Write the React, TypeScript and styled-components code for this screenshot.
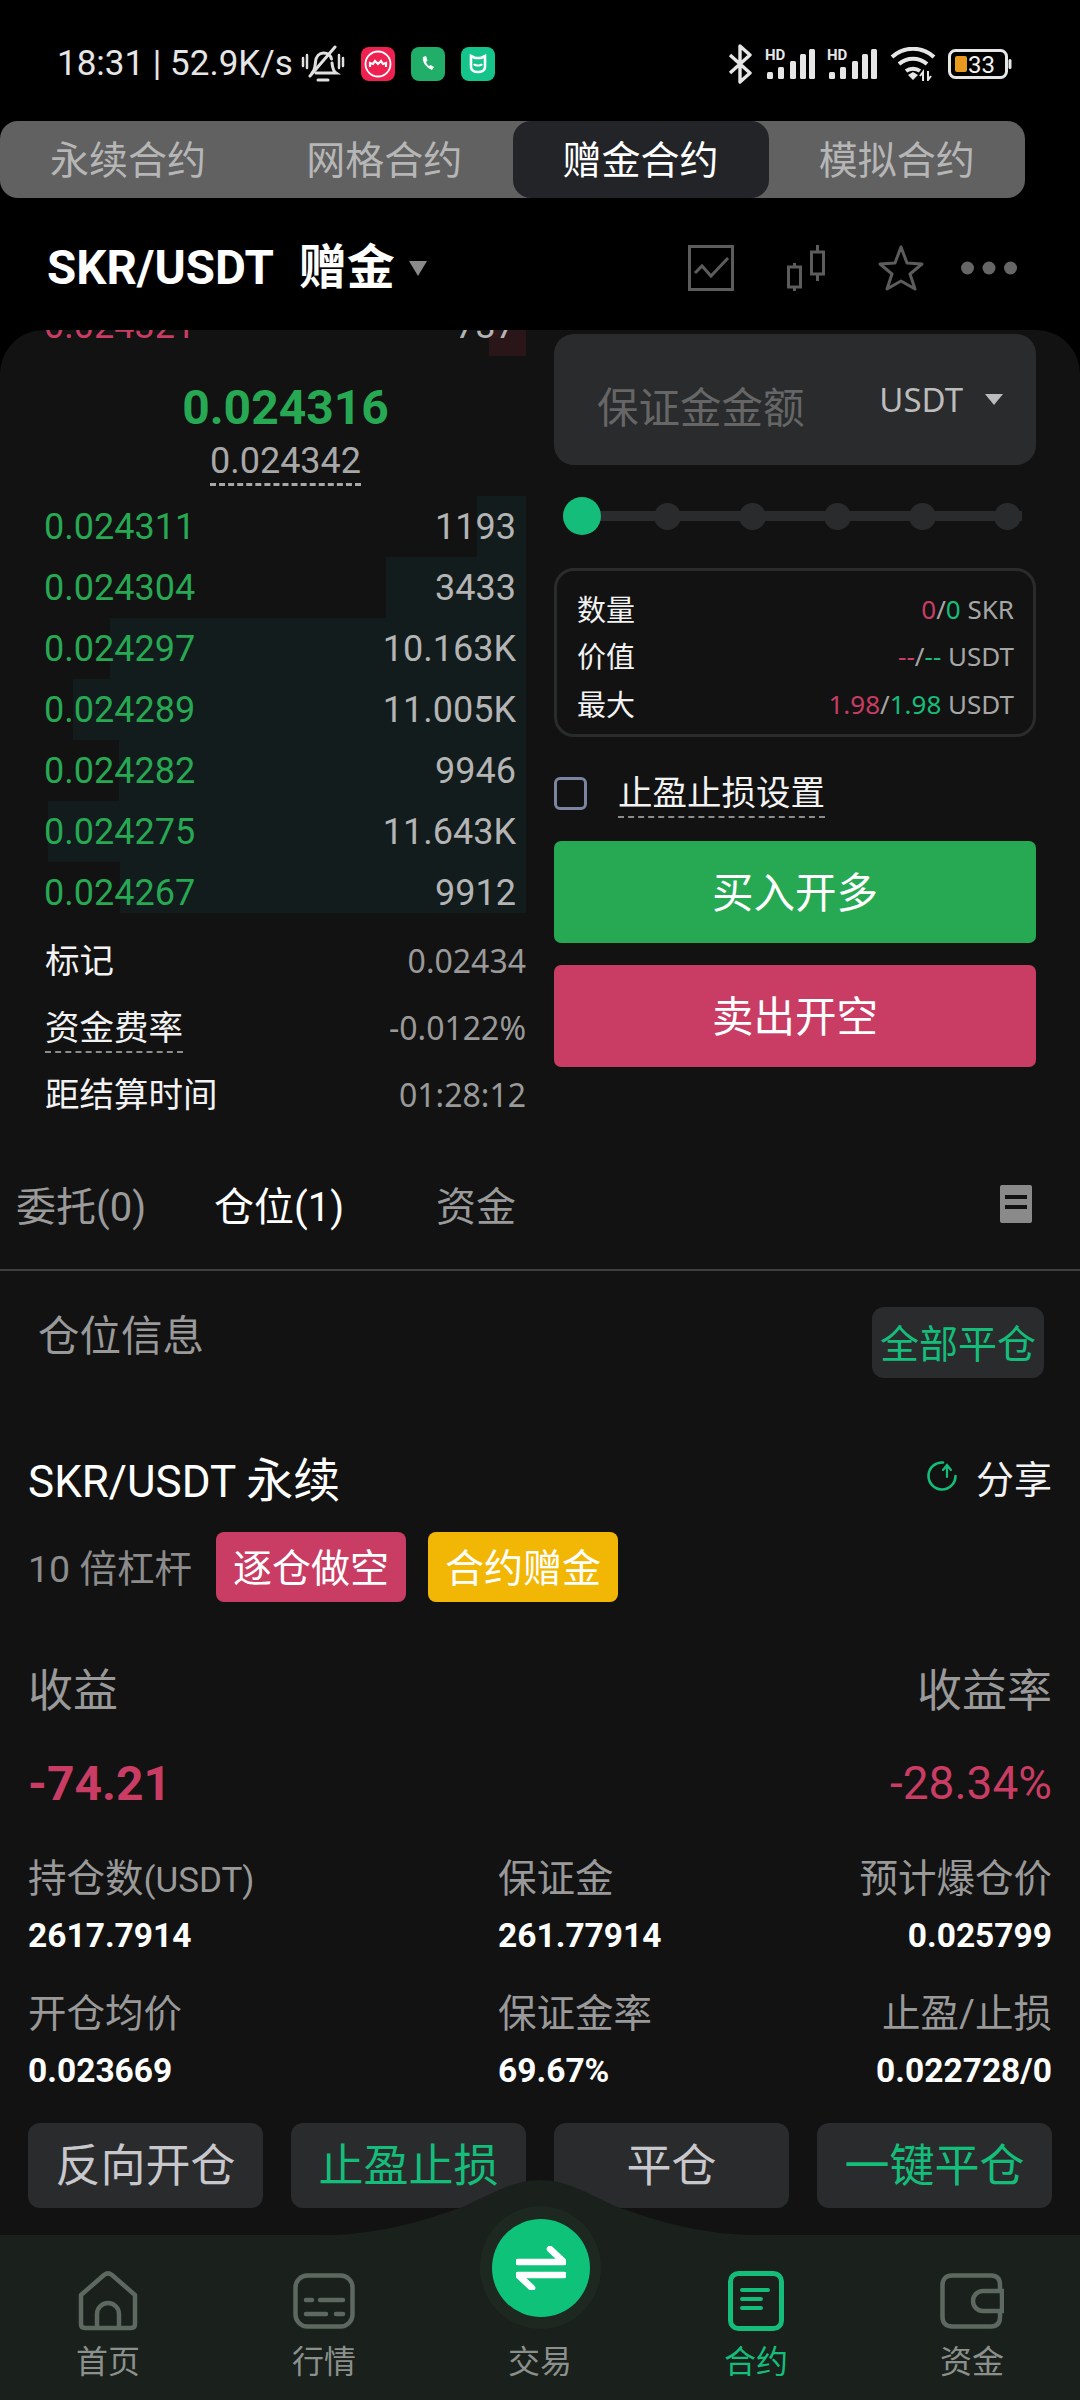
import React from "react";
import styled, { createGlobalStyle } from "styled-components";

const GREEN = "#27a853";
const MINT = "#15bd7b";
const RED = "#c93c63";
const PANEL = "#121212";
const CHIP = "#2a2b2d";
const SANS = `Roboto, "Noto Sans CJK SC", sans-serif`;
const NOTO = `"Noto Sans", "Noto Sans CJK SC", sans-serif`;

const Global = createGlobalStyle`
  html, body { margin: 0; padding: 0; background: #000; }
  body { font-family: ${SANS}; color: #fff; }
  * { box-sizing: border-box; }
`;

const Page = styled.div`
  width: 1080px;
  height: 2400px;
  overflow: hidden;
  display: flex;
  flex-direction: column;
  background: #000;
`;

/* status bar */
const StatusBar = styled.div`
  height: 121px;
  flex-shrink: 0;
  padding: 6px 68px 0 57px;
  display: flex;
  align-items: center;
  justify-content: space-between;
`;
const StatusLeft = styled.div`
  display: flex;
  align-items: center;
  gap: 16px;
`;
const StatusRight = styled.div`
  display: flex;
  align-items: center;
  gap: 12.5px;
`;
const Clock = styled.span`
  font-size: 35px;
  line-height: 42px;
  color: #e6e6e6;
  margin-right: -8px;
  white-space: pre;
`;

/* market tabs */
const MarketTabs = styled.div`
  width: 1025px;
  height: 77px;
  flex-shrink: 0;
  display: grid;
  grid-template-columns: repeat(4, 1fr);
  background: #616161;
  border-radius: 18px;
`;
const MarketTab = styled.div<{ $active?: boolean }>`
  padding-bottom: 5px;
  display: flex;
  align-items: center;
  justify-content: center;
  font-size: 39px;
  border-radius: 18px;
  color: ${(p) => (p.$active ? "#fff" : "#b6b6b6")};
  background: ${(p) => (p.$active ? "#232428" : "transparent")};
`;

/* pair header */
const PairHeader = styled.div`
  height: 132px;
  flex-shrink: 0;
  padding: 8px 0 0 47px;
  display: flex;
  align-items: center;
  justify-content: space-between;
`;
const PairName = styled.div`
  display: flex;
  align-items: center;
  font-size: 47.5px;
  font-weight: 700;
  line-height: 60px;
`;
const PairBadge = styled.span`
  margin-left: 25px;
  font-size: 48px;
`;
const PairCaret = styled.span`
  margin-left: 14px;
  width: 0;
  height: 0;
  border-left: 9px solid transparent;
  border-right: 9px solid transparent;
  border-top: 15px solid #8a8a8a;
`;
const PairTools = styled.div`
  width: 390px;
  margin-right: 2px;
  display: grid;
  grid-template-columns: 99px 91px 83px 56px;
  align-items: center;
  svg { display: block; }
`;

/* main panel */
const Panel = styled.div`
  flex: 1;
  min-height: 0;
  background: ${PANEL};
  border-radius: 44px 44px 0 0;
  overflow: hidden;
  display: flex;
  flex-direction: column;
`;
const TradeArea = styled.div`
  height: 798px;
  flex-shrink: 0;
  display: grid;
  grid-template-columns: 526px 482px;
  column-gap: 28px;
`;

/* order book */
const BookColumn = styled.div`
  display: flex;
  flex-direction: column;
`;
const AskClip = styled.div`
  height: 26px;
  flex-shrink: 0;
  overflow: hidden;
  display: flex;
  flex-direction: column;
  justify-content: flex-end;
`;
const PriceBlock = styled.div`
  height: 140px;
  flex-shrink: 0;
  padding: 22px 0 0 45px;
  display: flex;
  flex-direction: column;
  align-items: center;
`;
const LastPrice = styled.div`
  font-size: 48px;
  font-weight: 700;
  line-height: 60px;
  color: ${GREEN};
`;
const MarkPrice = styled.div`
  margin-top: 2px;
  font-size: 36px;
  line-height: 42px;
  height: 46px;
  color: #a8a8a8;
  border-bottom: 3px dashed #a8a8a8;
`;
const BidList = styled.div`
  height: 417px;
  flex-shrink: 0;
  overflow: hidden;
`;
const BookRow = styled.div<{ $depth: number; $tint: string }>`
  height: 61px;
  flex-shrink: 0;
  padding: 0 10px 0 44px;
  display: flex;
  align-items: center;
  justify-content: space-between;
  font-size: 36px;
  background: linear-gradient(
    to left,
    ${(p) => p.$tint} ${(p) => p.$depth}px,
    transparent ${(p) => p.$depth}px
  );
`;
const BookPrice = styled.span<{ $color: string }>`
  color: ${(p) => p.$color};
`;
const BookSize = styled.span`
  color: #b4b4b4;
`;
const FundingList = styled.div`
  margin-top: 14px;
  padding-left: 45px;
`;
const FundingRow = styled.div`
  height: 67px;
  display: flex;
  align-items: center;
  justify-content: space-between;
`;
const FundingLabel = styled.span<{ $dashed?: boolean }>`
  font-size: 34.5px;
  line-height: 46px;
  color: #f2f2f2;
  ${(p) => p.$dashed && "border-bottom: 2px dashed #8c8c8c; margin-top: 2px;"}
`;
const FundingValue = styled.span`
  font-family: ${NOTO};
  font-size: 32px;
  color: #999;
`;

/* order form */
const FormColumn = styled.div`
  padding-top: 4px;
`;
const AmountField = styled.div`
  height: 131px;
  padding: 0 33px 0 43px;
  background: ${CHIP};
  border-radius: 20px;
  display: flex;
  align-items: center;
  justify-content: space-between;
`;
const Placeholder = styled.span`
  padding-top: 11px;
  font-size: 41.5px;
  color: #666;
`;
const UnitPicker = styled.span`
  display: flex;
  align-items: center;
  gap: 22px;
  font-family: ${NOTO};
  font-size: 33px;
  color: #bcbcbc;
`;
const UnitCaret = styled.span`
  width: 0;
  height: 0;
  border-left: 9px solid transparent;
  border-right: 9px solid transparent;
  border-top: 11px solid #bcbcbc;
`;
const Slider = styled.div`
  width: 459px;
  height: 38px;
  margin: 32px 0 0 9px;
  display: flex;
  align-items: center;
  gap: 58px;
  background: linear-gradient(${CHIP}, ${CHIP}) center / 100% 10px no-repeat;
`;
const SliderThumb = styled.span`
  width: 38px;
  height: 38px;
  margin-right: -5px;
  border-radius: 50%;
  background: ${MINT};
`;
const SliderDot = styled.span`
  width: 27px;
  height: 27px;
  border-radius: 50%;
  background: ${CHIP};
`;
const QuoteBox = styled.div`
  height: 169px;
  margin-top: 33px;
  padding: 14px 19px 0 20px;
  border: 3px solid ${CHIP};
  border-radius: 20px;
`;
const QuoteRow = styled.div`
  height: 47.5px;
  display: flex;
  align-items: center;
  justify-content: space-between;
`;
const QuoteLabel = styled.span`
  margin-top: -2px;
  font-size: 29px;
  color: #f2f2f2;
`;
const QuoteValue = styled.span`
  font-family: ${NOTO};
  font-size: 26px;
  color: #a6a6a6;
  white-space: pre;
`;
const Tone = styled.span<{ $color: string }>`
  color: ${(p) => p.$color};
`;
const StopRow = styled.div`
  margin-top: 33px;
  display: flex;
  align-items: flex-start;
  gap: 31px;
`;
const CheckBox = styled.span`
  width: 33px;
  height: 33px;
  margin-top: 7px;
  border: 3px solid #7b84a0;
  border-radius: 6px;
`;
const StopLabel = styled.span`
  font-size: 34.5px;
  line-height: 46px;
  color: #f2f2f2;
  border-bottom: 2px dashed #8c8c8c;
`;
const SideButton = styled.div<{ $color: string; $gap: number }>`
  height: 102px;
  margin-top: ${(p) => p.$gap}px;
  padding-bottom: 4px;
  display: flex;
  align-items: center;
  justify-content: center;
  font-size: 41.5px;
  border-radius: 7px;
  background: ${(p) => p.$color};
`;

/* tabs below the form */
const RecordTabs = styled.div`
  height: 143px;
  flex-shrink: 0;
  padding: 11px 48px 0 16px;
  display: grid;
  grid-template-columns: 198px 222px 1fr auto;
  align-items: center;
  border-bottom: 2px solid #3f3f3f;
`;
const RecordTab = styled.span<{ $active?: boolean }>`
  font-size: 40px;
  color: ${(p) => (p.$active ? "#fff" : "#9a9a9a")};
`;

/* position */
const SectionHead = styled.div`
  padding: 36px 36px 0 38px;
  flex-shrink: 0;
  display: flex;
  align-items: flex-start;
  justify-content: space-between;
`;
const SectionTitle = styled.span`
  font-size: 41.5px;
  line-height: 60px;
  color: #999;
`;
const CloseAll = styled.span`
  width: 172px;
  height: 71px;
  padding-bottom: 4px;
  display: flex;
  align-items: center;
  justify-content: center;
  font-size: 39px;
  color: ${MINT};
  background: ${CHIP};
  border-radius: 12px;
`;
const Position = styled.div`
  padding: 0 28px;
  flex-shrink: 0;
`;
const SymbolRow = styled.div`
  height: 64px;
  margin-top: 66px;
  display: flex;
  align-items: center;
  justify-content: space-between;
`;
const SymbolName = styled.span`
  font-size: 44px;
`;
const SymbolKind = styled.span`
  font-size: 47px;
`;
const ShareLink = styled.span`
  display: flex;
  align-items: center;
  gap: 18px;
  font-size: 38px;
  color: #f2f2f2;
`;
const TagRow = styled.div`
  height: 70px;
  margin-top: 24px;
  display: flex;
  align-items: center;
`;
const Leverage = styled.span`
  width: 188px;
  padding-bottom: 3px;
  font-size: 37.5px;
  color: #8c8c8c;
`;
const Tag = styled.span<{ $color: string }>`
  width: 190px;
  height: 70px;
  margin-right: 22px;
  padding-bottom: 4px;
  display: flex;
  align-items: center;
  justify-content: center;
  font-size: 39px;
  border-radius: 8px;
  background: ${(p) => p.$color};
`;
const PnlLabels = styled.div`
  height: 60px;
  margin-top: 55px;
  display: flex;
  align-items: center;
  justify-content: space-between;
  font-size: 45px;
  color: #999;
`;
const PnlValues = styled.div`
  height: 60px;
  margin-top: 36px;
  display: flex;
  align-items: center;
  justify-content: space-between;
  color: ${RED};
`;
const PnlAmount = styled.span`
  font-size: 48px;
  font-weight: 700;
`;
const PnlRate = styled.span`
  font-size: 46px;
`;
const StatGrid = styled.div`
  margin-top: 41px;
  display: grid;
  grid-template-columns: 470px 1fr 1fr;
  row-gap: 31px;
`;
const StatCell = styled.div<{ $end?: boolean }>`
  text-align: ${(p) => (p.$end ? "right" : "left")};
`;
const StatLabel = styled.div`
  height: 50px;
  font-size: 38.5px;
  line-height: 50px;
  color: #999;
  white-space: nowrap;
`;
const StatUnit = styled.span`
  font-size: 35px;
`;
const StatValue = styled.div`
  height: 44px;
  margin-top: 10px;
  font-size: 33.5px;
  font-weight: 700;
  line-height: 44px;
`;
const ActionRow = styled.div`
  margin-top: 30px;
  display: grid;
  grid-template-columns: repeat(4, 235px);
  column-gap: 28px;
`;
const ActionButton = styled.div<{ $accent?: boolean }>`
  height: 85px;
  padding-bottom: 7px;
  display: flex;
  align-items: center;
  justify-content: center;
  font-size: 45px;
  color: ${(p) => (p.$accent ? MINT : "#c8c8cc")};
  background: ${CHIP};
  border-radius: 12px;
`;

/* bottom navigation */
const BottomNav = styled.nav`
  position: relative;
  height: 165px;
  flex-shrink: 0;
  margin-top: auto;
  padding-top: 36px;
  display: grid;
  grid-template-columns: repeat(5, 216px);
  background: #1a201b;
`;
const NavHump = styled.svg`
  position: absolute;
  left: 300px;
  top: -55px;
  display: block;
`;
const NavItem = styled.div<{ $active?: boolean }>`
  display: flex;
  flex-direction: column;
  align-items: center;
  font-size: 32px;
  color: ${(p) => (p.$active ? MINT : "#8b908c")};
`;
const NavIcon = styled.div`
  position: relative;
  height: 60px;
  display: flex;
  align-items: center;
  justify-content: center;
  svg { display: block; }
`;
const NavLabel = styled.span`
  margin-top: 11px;
  line-height: 40px;
`;
const SwapRing = styled.div`
  position: absolute;
  left: 50%;
  top: -65px;
  width: 121px;
  height: 123px;
  margin-left: -60px;
  display: flex;
  align-items: center;
  justify-content: center;
  border-radius: 50%;
  background: #1d2820;
`;
const SwapButton = styled.div`
  width: 98px;
  height: 98px;
  display: flex;
  align-items: center;
  justify-content: center;
  border-radius: 50%;
  background: #0ec27a;
`;

const BellMute = () => (
  <svg width="44" height="38" viewBox="0 0 44 38" fill="none" stroke="#e0e0e0" strokeWidth="3" strokeLinecap="round">
    <path d="M11 28c3-3 3-6 3.500-11 .5-6 4-9 8-9s7 2 8 6" />
    <path d="M31 18c.5 5 1 8 4 10H15" />
    <path d="M34 2 9 31" />
    <path d="M17 35h10" />
    <path d="M2 13v8M6 10v13M38 10v13M42 13v8" strokeWidth="2.500" />
  </svg>
);

const MeituIcon = () => (
  <svg width="34" height="34" viewBox="0 0 34 34">
    <rect width="34" height="34" rx="8" fill="#ee2150" />
    <circle cx="17" cy="17" r="12.500" fill="none" stroke="#fff" strokeWidth="1.800" />
    <path d="M9 20v-4l3 1 2-3 3 3 3-3 2 3 3-1v4" fill="none" stroke="#fff" strokeWidth="2.200" />
  </svg>
);

const PhoneApp = () => (
  <svg width="34" height="34" viewBox="0 0 34 34">
    <rect width="34" height="34" rx="8" fill="#20ae68" />
    <path d="M12 10c-1 4 2 10 9 13l2-3-3.500-2-1.500 1c-1.500-1-2.500-2.500-3-4l1.500-1.500L15 9z" fill="#fff" />
  </svg>
);

const MiHomeApp = () => (
  <svg width="34" height="34" viewBox="0 0 34 34">
    <rect width="34" height="34" rx="8" fill="#14c48a" />
    <path d="M10 9l4 2h6l4-2v11c0 3-3 5-7 5s-7-2-7-5z" fill="none" stroke="#fff" strokeWidth="2.600" />
    <path d="M13 17c1 2 7 2 8 0" fill="none" stroke="#fff" strokeWidth="2" />
  </svg>
);

const Bluetooth = () => (
  <svg width="24" height="40" viewBox="0 0 24 40" fill="none" stroke="#e6e6e6" strokeWidth="3.400" strokeLinejoin="round">
    <path d="M2 11l20 18-10 9V2l10 9L2 29" />
  </svg>
);

const SIGNAL_BARS: [number, number][] = [
  [2, 7],
  [13, 12],
  [25, 18],
  [35, 25],
  [44, 30],
];

const Signal = () => (
  <svg width="50" height="38" viewBox="0 -4 50 38" fill="#e6e6e6">
    <text x="0" y="11" fontFamily="Roboto" fontWeight="700" fontSize="15">
      HD
    </text>
    {SIGNAL_BARS.map(([x, h]) => (
      <rect key={x} x={x} y={30 - h} width="6" height={h} rx="1.500" />
    ))}
  </svg>
);

const Wifi = () => (
  <svg width="46" height="34" viewBox="0 0 46 34" fill="none" stroke="#e6e6e6" strokeWidth="4">
    <path d="M2 10c12-11 30-11 42 0" />
    <path d="M9 17c8-7 20-7 28 0" />
    <path d="M16 24c4-3 10-3 14 0" />
    <path d="M18 28l5 5 5-5-5-3z" fill="#e6e6e6" stroke="none" />
    <path d="M33 34v-9l-3 4M38 24v9l3-4" strokeWidth="2" />
  </svg>
);

const Battery = () => (
  <svg width="64" height="30" viewBox="0 0 64 30">
    <rect x="1.500" y="1.500" width="57" height="27" rx="6" fill="none" stroke="#e6e6e6" strokeWidth="3" />
    <rect x="7" y="7" width="12" height="16" rx="2" fill="#e79a1f" />
    <rect x="60.500" y="10" width="3" height="10" rx="1.500" fill="#e6e6e6" />
    <text x="20" y="24" fontFamily="Roboto" fontSize="24" fill="#f2f2f2">
      33
    </text>
  </svg>
);

const ChartTool = () => (
  <svg width="46" height="46" viewBox="0 0 46 46" fill="none" stroke="#5c5c5c" strokeWidth="3">
    <rect x="1.500" y="1.500" width="43" height="43" />
    <path d="M7 28l7-7 9 10 17-18" />
  </svg>
);

const CandleTool = () => (
  <svg width="38" height="46" viewBox="0 0 38 46" fill="none" stroke="#5c5c5c" strokeWidth="3">
    <rect x="1.500" y="22" width="12" height="20" />
    <path d="M7.500 18v4M7.500 42v4" />
    <rect x="24.500" y="7" width="12" height="22" />
    <path d="M30.500 0v7M30.500 29v7" />
  </svg>
);

const StarTool = () => (
  <svg width="46" height="46" viewBox="0 0 46 46" fill="none" stroke="#5c5c5c" strokeWidth="3" strokeLinejoin="round">
    <path d="M23 2l6 16 15 1-12 10 5 15-14-8-14 8 5-15L2 19l15-1z" />
  </svg>
);

const DotsTool = () => (
  <svg width="56" height="14" viewBox="0 0 56 14" fill="#666">
    <circle cx="6.500" cy="7" r="6.500" />
    <circle cx="28" cy="7" r="6.500" />
    <circle cx="49.500" cy="7" r="6.500" />
  </svg>
);

const ListIcon = () => (
  <svg width="32" height="38" viewBox="0 0 32 38">
    <rect width="32" height="38" rx="2" fill="#8a8a8a" />
    <rect x="5" y="10" width="22" height="4" fill={PANEL} />
    <rect x="5" y="20" width="22" height="4" fill={PANEL} />
  </svg>
);

const ShareIcon = () => (
  <svg width="32" height="32" viewBox="0 0 32 32" fill="none" stroke={MINT} strokeWidth="2.600" strokeLinecap="round">
    <path d="M17 2.500A13.500 13.500 0 1 0 29.500 16" />
    <path d="M21 17V6M17 10l4-5 4 5" strokeWidth="2.200" />
  </svg>
);

const HomeIcon = () => (
  <svg width="60" height="60" viewBox="0 0 60 60" fill="none" stroke="#5d6860" strokeWidth="4.500" strokeLinejoin="round">
    <path d="M3 24 26 4c2.500-2 5.500-2 8 0l23 20v29c0 2-1 4-4 4H7c-3 0-4-2-4-4z" />
    <path d="M19 57V43a11 11 0 0 1 22 0v14" />
  </svg>
);

const MarketIcon = () => (
  <svg width="62" height="56" viewBox="0 0 62 56" fill="none" stroke="#5d6860" strokeWidth="4.500" strokeLinecap="round">
    <rect x="2.500" y="2.500" width="57" height="51" rx="12" />
    <path d="M13 27h6M27 27h23M13 41h20M43 41h7" />
  </svg>
);

const ContractIcon = () => (
  <svg width="56" height="60" viewBox="0 0 56 60" fill="none" stroke={MINT} strokeLinecap="round">
    <rect x="2.500" y="2.500" width="51" height="55" rx="8" strokeWidth="5" />
    <path d="M14 19h26M14 28h19M14 37h19" strokeWidth="4" />
  </svg>
);

const WalletIcon = () => (
  <svg width="64" height="56" viewBox="0 0 64 56" fill="none" stroke="#5d6860" strokeWidth="4.500">
    <path d="M60 18v-6c0-6-3-9.500-9-9.500H12c-6 0-9.500 3.500-9.500 9.500v32c0 6 3.500 9.500 9.500 9.500h39c6 0 9-3.500 9-9.500v-6" />
    <path d="M62 18H43a10 10 0 0 0 0 20h19z" />
  </svg>
);

const SwapIcon = () => (
  <svg width="50" height="44" viewBox="0 0 50 44" fill="none" stroke="#fff" strokeWidth="6.500" strokeLinecap="round" strokeLinejoin="round">
    <path d="M2 16h46L34 3" />
    <path d="M48 29H2l14 13" />
  </svg>
);

const BIDS = [
  { price: "0.024311", size: "1193", depth: 49 },
  { price: "0.024304", size: "3433", depth: 140 },
  { price: "0.024297", size: "10.163K", depth: 416 },
  { price: "0.024289", size: "11.005K", depth: 453 },
  { price: "0.024282", size: "9946", depth: 407 },
  { price: "0.024275", size: "11.643K", depth: 478 },
  { price: "0.024267", size: "9912", depth: 406 },
];

const STATS = [
  { label: "持仓数", unit: "(USDT)", value: "2617.7914" },
  { label: "保证金", value: "261.77914" },
  { label: "预计爆仓价", value: "0.025799", end: true },
  { label: "开仓均价", value: "0.023669" },
  { label: "保证金率", value: "69.67%" },
  { label: "止盈/止损", value: "0.022728/0", end: true },
];

const App: React.FC = () => {
  return (
    <Page>
      <Global />
      <StatusBar>
        <StatusLeft>
          <Clock>18:31 | 52.9K/s</Clock>
          <BellMute />
          <MeituIcon />
          <PhoneApp />
          <MiHomeApp />
        </StatusLeft>
        <StatusRight>
          <Bluetooth />
          <Signal />
          <Signal />
          <Wifi />
          <Battery />
        </StatusRight>
      </StatusBar>

      <MarketTabs>
        <MarketTab>永续合约</MarketTab>
        <MarketTab>网格合约</MarketTab>
        <MarketTab $active>赠金合约</MarketTab>
        <MarketTab>模拟合约</MarketTab>
      </MarketTabs>

      <PairHeader>
        <PairName>
          SKR/USDT
          <PairBadge>赠金</PairBadge>
          <PairCaret />
        </PairName>
        <PairTools>
          <ChartTool />
          <CandleTool />
          <StarTool />
          <DotsTool />
        </PairTools>
      </PairHeader>

      <Panel>
        <TradeArea>
          <BookColumn>
            <AskClip>
              <BookRow $depth={37} $tint="#2a1519">
                <BookPrice $color={RED}>0.024321</BookPrice>
                <BookSize>737</BookSize>
              </BookRow>
            </AskClip>
            <PriceBlock>
              <LastPrice>0.024316</LastPrice>
              <MarkPrice>0.024342</MarkPrice>
            </PriceBlock>
            <BidList>
              {BIDS.map((bid) => (
                <BookRow key={bid.price} $depth={bid.depth} $tint="#121c1c">
                  <BookPrice $color={GREEN}>{bid.price}</BookPrice>
                  <BookSize>{bid.size}</BookSize>
                </BookRow>
              ))}
            </BidList>
            <FundingList>
              <FundingRow>
                <FundingLabel>标记</FundingLabel>
                <FundingValue>0.02434</FundingValue>
              </FundingRow>
              <FundingRow>
                <FundingLabel $dashed>资金费率</FundingLabel>
                <FundingValue>-0.0122%</FundingValue>
              </FundingRow>
              <FundingRow>
                <FundingLabel>距结算时间</FundingLabel>
                <FundingValue>01:28:12</FundingValue>
              </FundingRow>
            </FundingList>
          </BookColumn>

          <FormColumn>
            <AmountField>
              <Placeholder>保证金金额</Placeholder>
              <UnitPicker>
                USDT
                <UnitCaret />
              </UnitPicker>
            </AmountField>
            <Slider>
              <SliderThumb />
              <SliderDot />
              <SliderDot />
              <SliderDot />
              <SliderDot />
              <SliderDot />
            </Slider>
            <QuoteBox>
              <QuoteRow>
                <QuoteLabel>数量</QuoteLabel>
                <QuoteValue>
                  <Tone $color={RED}>0</Tone>/<Tone $color={MINT}>0</Tone> SKR
                </QuoteValue>
              </QuoteRow>
              <QuoteRow>
                <QuoteLabel>价值</QuoteLabel>
                <QuoteValue>
                  <Tone $color={RED}>--</Tone>/<Tone $color={MINT}>--</Tone> USDT
                </QuoteValue>
              </QuoteRow>
              <QuoteRow>
                <QuoteLabel>最大</QuoteLabel>
                <QuoteValue>
                  <Tone $color={RED}>1.98</Tone>/<Tone $color={MINT}>1.98</Tone> USDT
                </QuoteValue>
              </QuoteRow>
            </QuoteBox>
            <StopRow>
              <CheckBox />
              <StopLabel>止盈止损设置</StopLabel>
            </StopRow>
            <SideButton $color={GREEN} $gap={23}>
              买入开多
            </SideButton>
            <SideButton $color={RED} $gap={22}>
              卖出开空
            </SideButton>
          </FormColumn>
        </TradeArea>

        <RecordTabs>
          <RecordTab>委托(0)</RecordTab>
          <RecordTab $active>仓位(1)</RecordTab>
          <RecordTab>资金</RecordTab>
          <ListIcon />
        </RecordTabs>

        <SectionHead>
          <SectionTitle>仓位信息</SectionTitle>
          <CloseAll>全部平仓</CloseAll>
        </SectionHead>

        <Position>
          <SymbolRow>
            <SymbolName>
              SKR/USDT <SymbolKind>永续</SymbolKind>
            </SymbolName>
            <ShareLink>
              <ShareIcon />
              分享
            </ShareLink>
          </SymbolRow>
          <TagRow>
            <Leverage>10 倍杠杆</Leverage>
            <Tag $color={RED}>逐仓做空</Tag>
            <Tag $color="#f2b705">合约赠金</Tag>
          </TagRow>
          <PnlLabels>
            <span>收益</span>
            <span>收益率</span>
          </PnlLabels>
          <PnlValues>
            <PnlAmount>-74.21</PnlAmount>
            <PnlRate>-28.34%</PnlRate>
          </PnlValues>
          <StatGrid>
            {STATS.map((stat) => (
              <StatCell key={stat.label} $end={stat.end}>
                <StatLabel>
                  {stat.label}
                  {stat.unit && <StatUnit>{stat.unit}</StatUnit>}
                </StatLabel>
                <StatValue>{stat.value}</StatValue>
              </StatCell>
            ))}
          </StatGrid>
          <ActionRow>
            <ActionButton>反向开仓</ActionButton>
            <ActionButton $accent>止盈止损</ActionButton>
            <ActionButton>平仓</ActionButton>
            <ActionButton $accent>一键平仓</ActionButton>
          </ActionRow>
        </Position>

        <BottomNav>
          <NavHump width="480" height="56" viewBox="0 0 480 56" fill="#1a201b">
            <path d="M0 56C70 56 110 46 165 26 195 12 215 0 240 0s45 12 75 26c55 20 95 30 165 30z" />
          </NavHump>
          <NavItem>
            <NavIcon>
              <HomeIcon />
            </NavIcon>
            <NavLabel>首页</NavLabel>
          </NavItem>
          <NavItem>
            <NavIcon>
              <MarketIcon />
            </NavIcon>
            <NavLabel>行情</NavLabel>
          </NavItem>
          <NavItem>
            <NavIcon>
              <SwapRing>
                <SwapButton>
                  <SwapIcon />
                </SwapButton>
              </SwapRing>
            </NavIcon>
            <NavLabel>交易</NavLabel>
          </NavItem>
          <NavItem $active>
            <NavIcon>
              <ContractIcon />
            </NavIcon>
            <NavLabel>合约</NavLabel>
          </NavItem>
          <NavItem>
            <NavIcon>
              <WalletIcon />
            </NavIcon>
            <NavLabel>资金</NavLabel>
          </NavItem>
        </BottomNav>
      </Panel>
    </Page>
  );
};

export default App;
